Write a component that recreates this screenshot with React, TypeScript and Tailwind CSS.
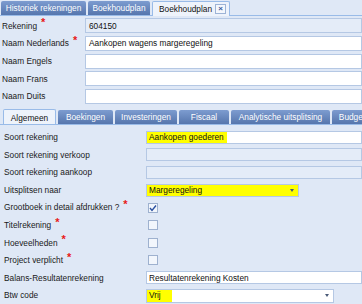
const topRows = [
  { label: "Rekening", req: true, value: "604150", readOnly: true },
  { label: "Naam Nederlands", req: true, value: "Aankopen wagens margeregeling" },
  { label: "Naam Engels", req: false, value: "" },
  { label: "Naam Frans", req: false, value: "" },
  { label: "Naam Duits", req: false, value: "" },
];

const subTabs = [
  { label: "Algemeen", w: "w-[53px]", active: true },
  { label: "Boekingen", w: "w-[55px]" },
  { label: "Investeringen", w: "w-[62px]" },
  { label: "Fiscaal", w: "w-[50px]" },
  { label: "Analytische uitsplitsing", w: "w-[99px]" },
  { label: "Budget", w: "w-[40px]" },
];

const Star = () => <span className="text-[#e81818] text-[11px] font-bold leading-none relative -top-[3px] ml-[4px]">*</span>;

const Arrow = () => (
  <span className="ml-auto mr-[4px] w-0 h-0 border-l-[2.5px] border-r-[2.5px] border-t-[3px] border-l-transparent border-r-transparent border-t-[#4a5a78]" />
);

const Check = ({ checked }: { checked?: boolean }) => (
  <div className="w-[10px] h-[10px] ml-[2px] border border-[#9eb1cf] bg-[#f2f6fc] flex items-center justify-center">
    {checked && (
      <svg width="8" height="8" viewBox="0 0 8 8">
        <path d="M1 4 L3 6.5 L7 1.5" fill="none" stroke="#2a4fa0" strokeWidth="1.4" />
      </svg>
    )}
  </div>
);

const Row = ({ label, req, children }: { label: string; req?: boolean; children?: React.ReactNode }) => (
  <div className="flex items-center h-[17.6px]">
    <div className="w-[146px] pl-[4px] flex items-center text-[#1a1a1a]">
      {label}
      {req && <Star />}
    </div>
    <div className="flex-1 flex items-center">{children}</div>
  </div>
);

export default function App() {
  return (
    <div className="w-[362px] h-[304px] overflow-hidden bg-[#dfe8f6] text-[8.3px] text-[#111]" style={{ fontFamily: '"Liberation Sans", Arial, sans-serif' }}>
      {/* top tabs */}
      <div className="flex items-end h-[16px] border-b border-[#99bbe8] pl-[1px] gap-[2px]">
        <div className="w-[85px] h-[14px] bg-gradient-to-b from-[#7d9cd0] to-[#5676ad] text-white flex items-center justify-center rounded-t-[2px]">Historiek rekeningen</div>
        <div className="w-[62px] h-[14px] bg-gradient-to-b from-[#7d9cd0] to-[#5676ad] text-white flex items-center justify-center rounded-t-[2px]">Boekhoudplan</div>
        <div className="w-[78px] h-[15px] -mb-px bg-[#eef3fb] border border-b-0 border-[#99bbe8] flex items-center pl-[6px] rounded-t-[2px]">
          Boekhoudplan
          <span className="ml-auto mr-[3px] w-[11px] h-[10px] border border-[#9db3d6] bg-[#f4f7fc] text-[#3a5a9a] text-[8px] leading-none flex items-center justify-center font-bold">×</span>
        </div>
      </div>

      {/* header fields */}
      <div className="pt-[1px]">
        {topRows.map((r) => (
          <div key={r.label} className="flex items-center h-[17.7px]">
            <div className="w-[85px] pl-[2px] flex items-center text-[#1a1a1a]">
              {r.label}
              {r.req && <Star />}
            </div>
            <div className={`flex-1 h-[15px] border border-[#b5c8e4] flex items-center pl-[3px] ${r.readOnly ? "bg-[#e4ecf8]" : "bg-white"}`}>
              {r.value}
            </div>
          </div>
        ))}
      </div>

      {/* sub tabs */}
      <div className="flex items-end h-[18px] mt-[2px] pl-[3px] gap-[2px] border-b border-[#99bbe8] overflow-hidden">
        {subTabs.map((t) =>
          t.active ? (
            <div key={t.label} className={`${t.w} h-[16px] -mb-px bg-[#eef3fb] border border-b-0 border-[#99bbe8] flex items-center justify-center rounded-t-[2px] shrink-0`}>
              {t.label}
            </div>
          ) : (
            <div key={t.label} className={`${t.w} h-[14px] bg-gradient-to-b from-[#7d9cd0] to-[#5676ad] text-white flex items-center justify-center rounded-t-[2px] shrink-0 whitespace-nowrap`}>
              {t.label}
            </div>
          )
        )}
      </div>

      {/* general fields */}
      <div className="pt-[3px]">
        <Row label="Soort rekening">
          <div className="flex-1 h-[13px] border border-[#b5c8e4] bg-white flex items-center">
            <span className="bg-[#ffff00] h-full flex items-center pl-[2px] pr-[3px]">Aankopen goederen</span>
          </div>
        </Row>
        <Row label="Soort rekening verkoop">
          <div className="flex-1 h-[13px] border border-[#b5c8e4] bg-[#e4ecf8]" />
        </Row>
        <Row label="Soort rekening aankoop">
          <div className="flex-1 h-[13px] border border-[#b5c8e4] bg-[#e4ecf8]" />
        </Row>
        <Row label="Uitsplitsen naar">
          <div className="w-[153px] h-[13px] border border-[#b5c8e4] bg-[#ffff00] flex items-center pl-[2px]">
            Margeregeling
            <Arrow />
          </div>
        </Row>
        <Row label="Grootboek in detail afdrukken ?" req>
          <Check checked />
        </Row>
        <Row label="Titelrekening" req>
          <Check />
        </Row>
        <Row label="Hoeveelheden" req>
          <Check />
        </Row>
        <Row label="Project verplicht" req>
          <Check />
        </Row>
        <Row label="Balans-Resultatenrekening">
          <div className="flex-1 h-[13px] border border-[#b5c8e4] bg-white flex items-center pl-[2px]">Resultatenrekening Kosten</div>
        </Row>
        <Row label="Btw code">
          <div className="w-[188px] h-[14px] border border-[#b5c8e4] bg-white flex items-center">
            <span className="bg-[#ffff00] h-full w-[25px] flex items-center pl-[2px]">Vrij</span>
            <Arrow />
          </div>
        </Row>
      </div>
    </div>
  );
}
